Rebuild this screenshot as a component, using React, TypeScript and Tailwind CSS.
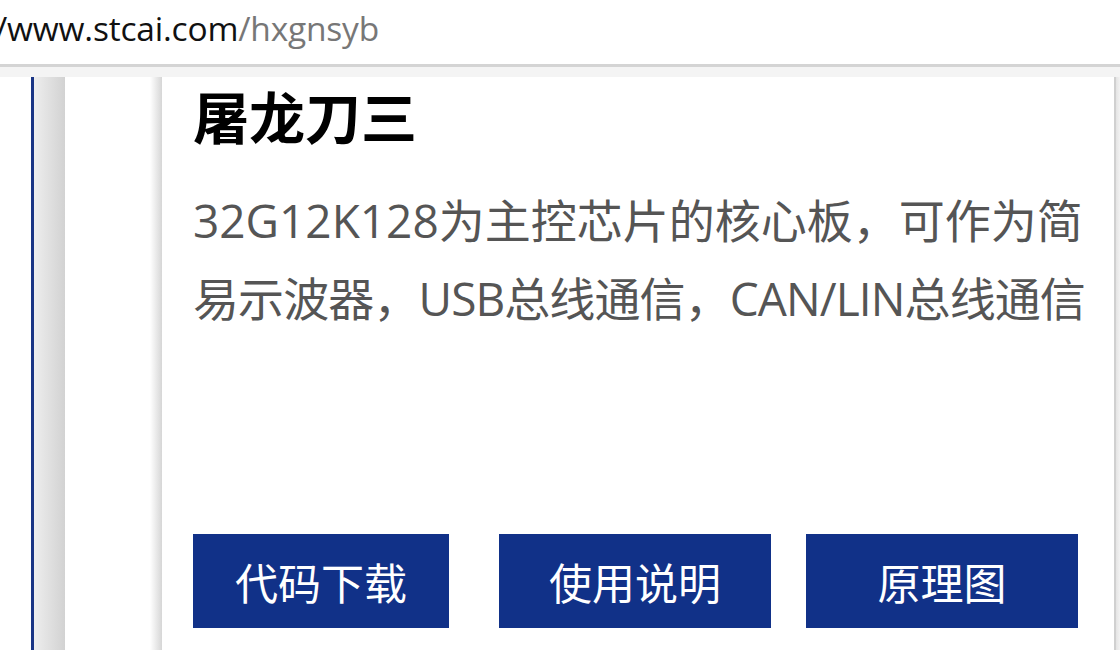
const CJK = "font-['Open_Sans','Noto_Sans_CJK_SC',sans-serif]";

const buttons = [
  { label: "代码下载", width: "w-[256px]" },
  { label: "使用说明", width: "w-[272px]" },
  { label: "原理图", width: "w-[272px]" },
];

export default function App() {
  return (
    <div className={`h-[650px] w-[1120px] overflow-hidden bg-white ${CJK}`}>
      {/* address bar */}
      <div className="h-[64px] bg-white flex items-center overflow-hidden">
        <div className="-ml-[5px] -mt-[8px] text-[33.5px] font-['Open_Sans',sans-serif] tracking-[-0.2px] whitespace-nowrap">
          <span className="text-[#111]">/www.stcai.com</span>
          <span className="text-[#777]">/hxgnsyb</span>
        </div>
      </div>
      <div className="h-[3px] bg-[#d4d4d4]" />
      <div className="h-[10px] bg-[#f4f4f4]" />

      <div className="flex h-[573px]">
        <div className="w-[31px] bg-white" />
        <div className="w-[3px] bg-[#1a3585]" />
        <div className="w-[31px] bg-gradient-to-r from-[#eeeeee] to-[#d2d2d2]" />
        <div className="w-[85px] bg-white" />
        <div className="w-[12px] bg-gradient-to-r from-white to-[#d6d6d6]" />

        <div className="flex-1 bg-white pl-[31px] pr-[20px] flex flex-col">
          <h1 className="-mt-[5px] text-[56px] leading-[85px] font-bold text-black font-['Noto_Sans_CJK_SC',sans-serif]">
            屠龙刀三
          </h1>
          <p className="mt-[24px] h-[176px] text-[46px] leading-[78px] text-[#555555] whitespace-nowrap">
            <span className="block tracking-[0px]">32G12K128为主控芯片的核心板，可作为简</span>
            <span className="block tracking-[-0.9px]">易示波器，USB总线通信，CAN/LIN总线通信</span>
          </p>
          <div className="mt-[177px] flex">
            {buttons.map((b, i) => (
              <button
                key={b.label}
                className={`${b.width} h-[94px] bg-[#113188] text-white text-[43px] font-['Noto_Sans_CJK_SC',sans-serif] flex items-center justify-center ${
                  i === 1 ? "ml-[50px]" : i === 2 ? "ml-[35px]" : ""
                }`}
              >
                {b.label}
              </button>
            ))}
          </div>
        </div>

        <div className="w-[2px] bg-[#d0d0d0]" />
        <div className="w-[4px] bg-gradient-to-r from-[#e4e4e4] to-[#f2f2f2]" />
      </div>
    </div>
  );
}
